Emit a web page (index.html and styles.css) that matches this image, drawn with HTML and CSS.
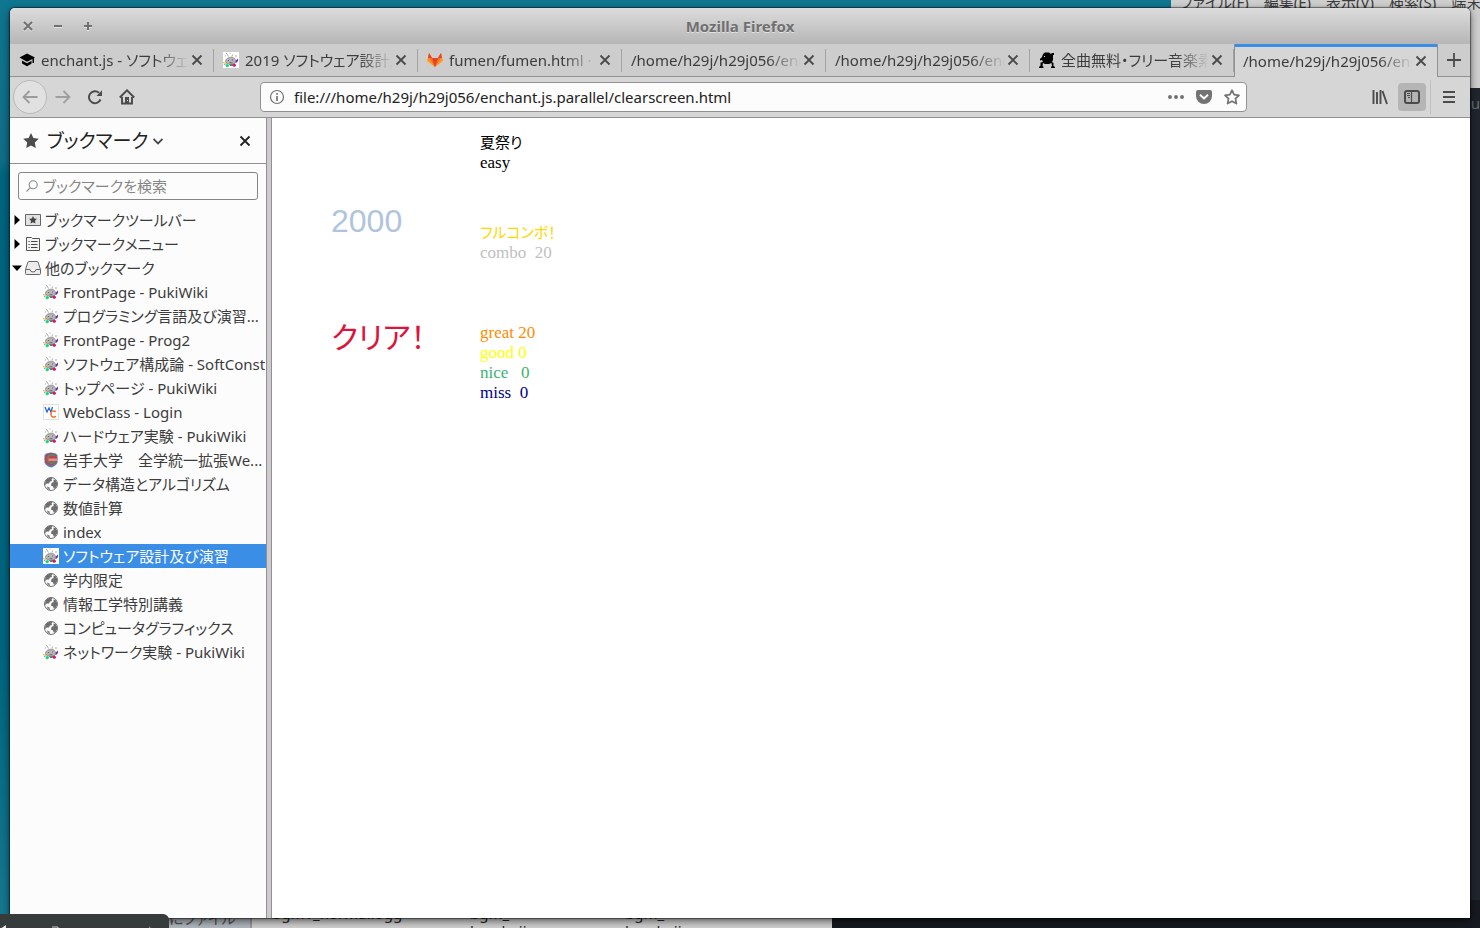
FILE: index.html
```html
<!DOCTYPE html>
<html lang="ja">
<head>
<meta charset="utf-8">
<title>Mozilla Firefox</title>
<link rel="stylesheet" href="styles.css">
</head>
<body>
<svg class="sprites" width="0" height="0" aria-hidden="true">
  <symbol id="close" viewBox="0 0 16 16"><path d="M3.500 3.500l9 9M12.500 3.500l-9 9" fill="none" stroke="currentColor" stroke-width="1.800"/></symbol>
  <symbol id="puki" viewBox="0 0 16 16">
    <path d="M4 2l1.500 2.500M3 1.500h1M9.500 2.500L9 4.500M12 4h2M6.500 1h1M2 4h1" stroke="#888" stroke-width="0.700" fill="none"/>
    <path d="M2.500 9.500c0-2 1.500-3.500 4-4 2-.8 5 0 5.500 2 1 .5 1.500 1.500 1 2.500-1 1.500-2.500 2-5 2-3 0-5.500-.5-5.500-2.500z" fill="#b4b4b4" stroke="#808080" stroke-width="0.700"/>
    <path d="M5 8h1v1H5zM9 7.500h1v1H9zM6.500 10h3v.8h-3z" fill="#666"/>
    <path d="M0 10l3 .8V12l-3-1z" fill="#dcc83c"/><path d="M.5 11.500L3 13H1z" fill="#c878b8"/>
    <path d="M12.500 9l2.500-2.500v2.500l-2 2z" fill="#6a1fc0"/><circle cx="4.200" cy="13.600" r="1.700" fill="#14d87c"/>
    <circle cx="11.300" cy="13.200" r="1.600" fill="#d01878"/><path d="M6 12h4v2H7z" fill="#777"/>
  </symbol>
  <symbol id="globe" viewBox="0 0 16 16">
    <circle cx="8" cy="8" r="6.500" fill="#fafafa" stroke="#6e6e6e"/>
    <path d="M2.500 4.500C4.500 2 7 1.300 9.500 2L8.500 3.500 9 5 7 5.500 6 7.500 4 7.500 2 9zM10.500 3.500l2 .5L14 6.500v3L12.500 12 11 13l-1-2.500L8 9.500 8.500 7l2-1z" fill="#6e6e6e"/>
    <path d="M4 10.500l2.500.8L7 14l-2.500-1z" fill="#858585"/>
  </symbol>
  <symbol id="star" viewBox="0 0 16 16"><path d="M8 0l2.400 5 5.400.7-4 3.800 1 5.500L8 12.400 3.200 15l1-5.500-4-3.800L5.600 5z"/></symbol>
</svg>

<div class="desktop">
  <div class="terminal" aria-hidden="true">
    <div class="terminal-menu"><span>ファイル(F)</span><span>編集(E)</span><span>表示(V)</span><span>検索(S)</span><span>端末(T)</span></div>
    <div class="terminal-screen">nu</div>
  </div>
  <div class="files" aria-hidden="true">
    <div class="files-side">にファイル</div>
    <div class="files-grid"><span>bgm1_normal.ogg</span><span>bgm_<br>kurakujj</span><span>bgm_<br>kurakujj</span></div>
  </div>
  <div class="night" aria-hidden="true"></div>

  <main class="window">
    <header class="titlebar">
      <div class="controls">
        <button aria-label="閉じる"><svg width="10" height="10" viewBox="0 0 10 10"><path d="M1 1l8 8M9 1L1 9" stroke="currentColor" stroke-width="2"/></svg></button>
        <button aria-label="最小化"><svg width="10" height="10" viewBox="0 0 10 10"><path d="M1 5h8" stroke="currentColor" stroke-width="2"/></svg></button>
        <button aria-label="最大化"><svg width="10" height="10" viewBox="0 0 10 10"><path d="M1 5h8M5 1v8" stroke="currentColor" stroke-width="2"/></svg></button>
      </div>
      <h1>Mozilla Firefox</h1>
    </header>

    <nav class="tabs">
      <div class="tab"><svg class="icon" viewBox="0 0 16 16"><path d="M8 1.500l8 4-1 .6v5h-1.500V7L8 9.800.5 5.500z"/><path d="M3 8.500l5 2.800 4.500-2.500v3L8 14.300l-5-2.800z"/></svg><button class="label">enchant.js - ソフトウェア設計</button><button class="x" aria-label="タブを閉じる"><svg><use href="#close"/></svg></button></div>
      <div class="tab"><svg class="icon white"><use href="#puki"/></svg><button class="label">2019 ソフトウェア設計及び演習</button><button class="x" aria-label="タブを閉じる"><svg><use href="#close"/></svg></button></div>
      <div class="tab"><svg class="icon" viewBox="0 0 16 16"><path d="M8 15L0 9l2-8 3 5h6l3-5 2 8z" fill="#fc9a26"/><path d="M8 15L2 6l0-5 3 5h6l3-5v5z" fill="#fc6d26"/><path d="M8 15L5 6h6zM2 1l3 5H1zM14 1l-3 5h4z" fill="#e24329"/></svg><button class="label">fumen/fumen.html · master</button><button class="x" aria-label="タブを閉じる"><svg><use href="#close"/></svg></button></div>
      <div class="tab"><button class="label">/home/h29j/h29j056/enchant.js</button><button class="x" aria-label="タブを閉じる"><svg><use href="#close"/></svg></button></div>
      <div class="tab"><button class="label">/home/h29j/h29j056/enchant.js</button><button class="x" aria-label="タブを閉じる"><svg><use href="#close"/></svg></button></div>
      <div class="tab"><svg class="icon" viewBox="0 0 16 16"><path d="M4 2l2-1.500h4L12 2l1-1h2v2h-1v5l-1 2 1.500 1v3l1.500 1v1h-4v-1l1-1-.5-3L10 12H6l-2-1-.5 3 1 1v1H0v-1l1.500-1.500v-3L4 10 3 8l-2 .5V7l2-2z"/><path d="M5 4h1v1H5z" fill="#ddd"/></svg><button class="label">全曲無料・フリー音楽素材</button><button class="x" aria-label="タブを閉じる"><svg><use href="#close"/></svg></button></div>
      <div class="tab active"><button class="label">/home/h29j/h29j056/enchant.js</button><button class="x" aria-label="タブを閉じる"><svg><use href="#close"/></svg></button></div>
      <button class="new-tab" aria-label="新しいタブ"><svg width="16" height="16" viewBox="0 0 16 16"><path d="M1 8h14M8 1v14" stroke="currentColor" stroke-width="1.800"/></svg></button>
    </nav>

    <div class="toolbar">
      <div class="nav-buttons">
        <button class="back" aria-label="戻る"><svg viewBox="0 0 16 16"><path d="M15.500 8H1.500M7.500 2L1.500 8l6 6"/></svg></button>
        <button class="forward" aria-label="進む"><svg viewBox="0 0 16 16"><path d="M.5 8h14M8.500 2l6 6-6 6"/></svg></button>
        <button aria-label="再読み込み"><svg viewBox="0 0 16 16"><path d="M13.500 10.500A6 6 0 1 1 12 3.800" stroke-width="2"/><path d="M9.500 7H15V1.300z" fill="currentColor" stroke="none"/></svg></button>
        <button aria-label="ホーム"><svg viewBox="0 0 16 16"><path d="M.8 8.500L8 1.300l7.200 7.200M3 8v6.500h10V8" stroke-width="1.900"/><path d="M6 8h4v6H6z" fill="currentColor" stroke="none"/><path d="M8.500 11v1" stroke="#ddd" stroke-width="1"/></svg></button>
      </div>
      <div class="urlbar">
        <svg viewBox="0 0 16 16"><circle cx="8" cy="8" r="6.500" stroke-width="1.200"/><path d="M8 7v5M8 4v1.700" stroke-width="1.700"/></svg>
        <input type="text" aria-label="アドレス" value="file:///home/h29j/h29j056/enchant.js.parallel/clearscreen.html">
        <button aria-label="ページ操作"><svg viewBox="0 0 16 16"><g fill="currentColor" stroke="none"><circle cx="2" cy="8" r="2"/><circle cx="8" cy="8" r="2"/><circle cx="14" cy="8" r="2"/></g></svg></button>
        <button aria-label="Pocket に保存"><svg viewBox="0 0 16 16"><path d="M2 1h12q2 0 2 2v4a8 8 0 0 1-16 0V3q0-2 2-2z" fill="currentColor" stroke="none"/><path d="M4 5.800l4 3.700 4-3.700" stroke="#fff" stroke-width="2"/></svg></button>
        <button aria-label="ブックマークに追加"><svg viewBox="0 0 16 16"><path d="M8 1.200l2.100 4.400 4.900.7-3.500 3.400.9 4.900L8 12.200l-4.400 2.400.9-4.900L1 6.300l4.900-.7z" stroke-width="1.700" stroke-linejoin="round"/></svg></button>
      </div>
      <div class="tools">
        <button aria-label="ライブラリー"><svg viewBox="0 0 16 16"><path d="M1.500 1v14M5 3v12M8.500 1v14M10.500 2L15 15" stroke-width="1.900"/></svg></button>
        <button class="pressed" aria-label="サイドバー"><svg viewBox="0 0 16 16"><rect x="1" y="2" width="14" height="12" rx="2" stroke-width="2"/><path d="M7.500 2v12" stroke-width="1.200"/><path d="M3 4.500h3M3 6.500h3M4 8.500h2" stroke-width="1"/></svg></button>
        <button class="menu" aria-label="メニュー"><svg viewBox="0 0 16 16"><path d="M2 3h12M2 8h12M2 13h12" stroke-width="1.800"/></svg></button>
      </div>
    </div>

    <div class="body">
      <aside class="sidebar">
        <div class="side-head">
          <svg class="icon"><use href="#star"/></svg>
          <button class="side-title">ブックマーク<svg width="10" height="10" viewBox="0 0 10 10"><path d="M.5 3L5 7.500 9.500 3" fill="none" stroke="#4a4a4a" stroke-width="1.800"/></svg></button>
          <button class="x" aria-label="サイドバーを閉じる"><svg><use href="#close"/></svg></button>
        </div>
        <label class="search">
          <svg width="12" height="12" viewBox="0 0 12 12" fill="none" stroke="#8a8a8a" stroke-width="1.100"><circle cx="7.200" cy="4.800" r="4"/><path d="M4.300 7.700L.5 11.500"/></svg>
          <input type="search" placeholder="ブックマークを検索" aria-label="ブックマークを検索">
        </label>
        <ul class="tree">
          <li><a class="folder" href="#"><svg class="arrow" viewBox="0 0 10 10"><path d="M2.500 0v10L8 5z"/></svg><svg class="icon" viewBox="0 0 16 16"><path d="M.5 2.500h15v11H.5z" fill="#e2e2e2" stroke="#666"/><path d="M8 4l1.200 2.500 2.800.3-2 1.900.5 2.800L8 10.200l-2.500 1.300.5-2.800-2-1.900 2.800-.3z" fill="#444"/></svg>ブックマークツールバー</a></li>
          <li><a class="folder" href="#"><svg class="arrow" viewBox="0 0 10 10"><path d="M2.500 0v10L8 5z"/></svg><svg class="icon" viewBox="0 0 16 16"><path d="M1.500 14.500v-13h5l1 1h7v12z" fill="#f3f3f3" stroke="#555"/><path d="M3.500 5.500h1.200M6 5.500h6.500M3.500 8.500h1.200M6 8.500h6.500M3.500 11.500h1.200M6 11.500h6.500" stroke="#444"/></svg>ブックマークメニュー</a></li>
          <li><a class="folder" href="#"><svg class="arrow" viewBox="0 0 10 10"><path d="M0 2.500h10L5 8z"/></svg><svg class="icon" viewBox="0 0 16 16"><path d="M.5 13.500V9.500L3 2q.3-.5 1-.5h8q.7 0 1 .5l2.500 7.500v4q0 1-1 1h-13q-1 0-1-1zM.5 9.500H5q.5 2.500 3 2.500t3-2.500h4.500" fill="#ececec" stroke="#666"/></svg>他のブックマーク</a></li>
          <li><a href="#"><svg class="icon"><use href="#puki"/></svg><span>FrontPage - PukiWiki</span></a></li>
          <li><a href="#"><svg class="icon"><use href="#puki"/></svg><span>プログラミング言語及び演習...</span></a></li>
          <li><a href="#"><svg class="icon"><use href="#puki"/></svg><span>FrontPage - Prog2</span></a></li>
          <li><a href="#"><svg class="icon"><use href="#puki"/></svg><span>ソフトウェア構成論 - SoftConst</span></a></li>
          <li><a href="#"><svg class="icon"><use href="#puki"/></svg><span>トップページ - PukiWiki</span></a></li>
          <li><a href="#"><svg class="icon" viewBox="0 0 16 16"><path d="M.5.5h15v15H.5z" fill="#fff" stroke="#e2e2e2"/><path d="M2 3l2 5 2-4 2 4 1.500-5" fill="none" stroke="#2468dc" stroke-width="1.300"/><path d="M13 7.500Q8 5.500 8 10t5 2.500" fill="none" stroke="#f07028" stroke-width="1.500"/></svg><span>WebClass - Login</span></a></li>
          <li><a href="#"><svg class="icon"><use href="#puki"/></svg><span>ハードウェア実験 - PukiWiki</span></a></li>
          <li><a href="#"><svg class="icon" viewBox="0 0 16 16"><path d="M1.500 3.500L3 1.500l5-1 5 1 1.500 2v7Q13 14 8 15.500 3 14 1.500 10.500z" fill="#4a80bc"/><circle cx="8" cy="7.200" r="6.200" fill="#d03c4c"/><path d="M12 4.500Q8 1 5 5q-1.500 5.500 3 6 3.500 0 4-2.500" fill="none" stroke="#3d9a68" stroke-width="1.600"/><path d="M5.500 6.500h8.500v2.500H5.500z" fill="#e88c88"/></svg><span>岩手大学　全学統一拡張We...</span></a></li>
          <li><a href="#"><svg class="icon"><use href="#globe"/></svg><span>データ構造とアルゴリズム</span></a></li>
          <li><a href="#"><svg class="icon"><use href="#globe"/></svg><span>数値計算</span></a></li>
          <li><a href="#"><svg class="icon"><use href="#globe"/></svg><span>index</span></a></li>
          <li><a class="selected" href="#"><svg class="icon white"><use href="#puki"/></svg><span>ソフトウェア設計及び演習</span></a></li>
          <li><a href="#"><svg class="icon"><use href="#globe"/></svg><span>学内限定</span></a></li>
          <li><a href="#"><svg class="icon"><use href="#globe"/></svg><span>情報工学特別講義</span></a></li>
          <li><a href="#"><svg class="icon"><use href="#globe"/></svg><span>コンピュータグラフィックス</span></a></li>
          <li><a href="#"><svg class="icon"><use href="#puki"/></svg><span>ネットワーク実験 - PukiWiki</span></a></li>
        </ul>
      </aside>
      <div class="splitter"></div>
      <section class="page">
        <div class="song"><p class="name">夏祭り</p><p>easy</p></div>
        <p class="score">2000</p>
        <div class="combo"><p class="full">フルコンボ！</p><p>combo&nbsp; 20</p></div>
        <p class="clear">クリア！</p>
        <div class="counts"><p class="great">great 20</p><p class="good">good 0</p><p class="nice">nice&nbsp;&nbsp; 0</p><p class="miss">miss&nbsp; 0</p></div>
      </section>
    </div>
  </main>
  <div class="dock" aria-hidden="true"><svg width="160" height="14" viewBox="0 0 160 14"><path d="M0 13l6-4v5H0z" fill="#e8e8e8"/><path d="M52 11h6v2h3" fill="none" stroke="#ccc"/><path d="M99 12h6v2h-6z" fill="#8fe36c"/><path d="M149 10l4 4h-4z" fill="#888"/></svg></div>
</div>
</body>
</html>
```
FILE: styles.css
```css
* { box-sizing: border-box; }
body {
  margin: 0;
  font-family: "Noto Sans", "Noto Sans CJK JP", sans-serif;
  font-size: 15px;
  line-height: 20px;
  color: #3c3c3c;
  font-feature-settings: "palt";
}
p, h1, ul { margin: 0; padding: 0; }
button, input {
  font: inherit;
  font-feature-settings: inherit;
  color: inherit;
  background: none;
  border: 0;
  padding: 0;
  margin: 0;
}
button { display: flex; align-items: center; justify-content: center; }
input { outline: 0; min-width: 0; }
.sprites { position: absolute; }
.icon { width: 16px; height: 16px; flex: none; }
.white { background: #fff; }

.desktop {
  position: relative;
  height: 100vh;
  padding: 8px 10px 10px;
  overflow: hidden;
  background: linear-gradient(#0f7690, #0f6f88 160px, #006580 176px, #00657f 70%, #157a90);
}

/* windows lying behind the browser */
.terminal { position: absolute; top: 0; right: 0; bottom: 0; left: 1171px; background: #cfcfcf; }
.terminal-menu { display: flex; gap: 15px; padding-left: 9px; height: 96px; margin-top: -8px; white-space: nowrap; overflow: hidden; }
.terminal-screen { height: 100%; background: #21262e; color: #667078; text-align: right; line-height: 30px; }
.files { position: absolute; left: 169px; top: 880px; bottom: 0; width: 663px; display: flex; background: #d2d2d2; color: #222; }
.files-side { width: 83px; padding-top: 28px; background: #b3b9c0; border-right: 2px solid #999; color: #555; overflow: hidden; white-space: nowrap; }
.files-grid { flex: 1; display: grid; grid-template-columns: 198px 155px 1fr; padding: 24px 20px 0; line-height: 18px; }
.night { position: absolute; left: 832px; right: 0; top: 900px; bottom: 0; background: #171a20; }
.dock { position: absolute; left: 0; bottom: 0; width: 169px; height: 14px; background: #363b3b; border-radius: 0 6px 0 0; overflow: hidden; }

.window {
  position: relative;
  height: 100%;
  display: flex;
  flex-direction: column;
  background: #fff;
  border-radius: 5px 5px 0 0;
  box-shadow: 0 0 1px 1px rgba(0, 0, 0, .45), 0 3px 9px rgba(0, 0, 0, .6);
}

.titlebar {
  display: grid;
  grid-template-columns: 1fr auto 1fr;
  align-items: center;
  height: 36px;
  border-radius: 5px 5px 0 0;
  background: linear-gradient(#dcdcdc, #b6b6b6);
  color: #707070;
}
.titlebar h1 { font-size: 15px; font-weight: 700; text-shadow: 0 1px #e2e2e2; }
.controls { display: flex; gap: 20px; padding-left: 13px; }
.controls svg { filter: drop-shadow(0 1px #e6e6e6); }

.tabs { display: flex; height: 33px; background: #cdcdcd; }
.tab {
  position: relative;
  flex: 1 1 0;
  min-width: 0;
  display: flex;
  align-items: center;
  gap: 6px;
  padding: 0 9px;
  border-bottom: 1px solid #919191;
}
.tab:not(.active)::after {
  content: "";
  position: absolute;
  right: 0;
  top: 5px;
  bottom: 4px;
  width: 1px;
  background: #a3a3a3;
}
.tab .label {
  flex: 1;
  min-width: 0;
  display: block;
  text-align: left;
  white-space: nowrap;
  overflow: hidden;
  mask-image: linear-gradient(90deg, #000 calc(100% - 34px), transparent);
}
.x, .x svg { width: 16px; height: 16px; }
.x { flex: none; color: #4a4a4a; }
.tab .x { margin-left: -6px; }
.tab.active { padding: 0 8px; background: #d6d6d6; border: 1px solid #919191; border-width: 0 1px; box-shadow: inset 0 3px #3a8ee6; }
.new-tab { width: 32px; border-bottom: 1px solid #919191; color: #4a4a4a; }

.toolbar {
  display: flex;
  align-items: center;
  height: 41px;
  padding: 0 3px 0 3px;
  background: #d6d6d6;
  border-bottom: 1px solid #919191;
  color: #4c4c4c;
}
.toolbar svg { width: 16px; height: 16px; fill: none; stroke: currentColor; stroke-width: 1.800; }
.nav-buttons { display: flex; align-items: center; flex: 0 0 247px; }
.nav-buttons button { width: 32px; height: 32px; }
.nav-buttons .back { width: 34px; height: 34px; border: 1px solid #b9b9b9; border-radius: 50%; background: #e1e1e1; color: #9b9b9b; }
.nav-buttons .forward { color: #9f9f9f; }
.urlbar {
  flex: 1;
  display: flex;
  align-items: center;
  gap: 12px;
  height: 30px;
  padding: 0 6px 0 8px;
  background: #fcfcfc;
  border: 1px solid #919191;
  border-radius: 4px;
  color: #737373;
}
.urlbar > svg { margin-right: -3px; }
.urlbar input { flex: 1; color: #222; }
.tools { flex: 0 0 220px; display: flex; align-items: center; justify-content: flex-end; gap: 4px; }
.tools button { width: 28px; height: 28px; border-radius: 4px; }
.tools .pressed { background: #b5b5b5; }
.tools .menu { height: 34px; width: 37px; border-left: 1px solid #c0c0c0; border-radius: 0; }

.body { flex: 1; min-height: 0; display: flex; }
.sidebar { width: 256px; display: flex; flex-direction: column; background: #fcfcfc; }
.splitter { width: 6px; background: #cdcbcd; border: 1px solid #919191; border-width: 0 1px; }
.side-head { display: flex; align-items: center; height: 46px; padding: 0 13px; border-bottom: 1px solid #919191; fill: #4c4c4c; }
.side-title { flex: 1; justify-content: flex-start; gap: 5px; padding-left: 8px; font-size: 19px; color: #222; }
.side-head .x { color: #222; }
.search {
  display: flex;
  align-items: center;
  gap: 5px;
  height: 28px;
  margin: 8px;
  padding: 0 7px;
  border: 1px solid #858585;
  border-radius: 3px;
}
.search input { flex: 1; }
.search input::placeholder { color: #858585; opacity: 1; }
.tree { list-style: none; }
.tree a {
  display: flex;
  align-items: center;
  gap: 4px;
  height: 24px;
  padding-left: 33px;
  color: inherit;
  text-decoration: none;
  white-space: nowrap;
}
.tree .folder { padding-left: 2px; }
.tree .arrow { width: 10px; height: 10px; margin-right: -1px; }
.tree .selected { background: #3a8ee6; color: #fff; }

.page {
  flex: 1;
  display: grid;
  grid-template-columns: 149px 1fr;
  grid-template-rows: 80px 120px auto;
  align-content: start;
  padding: 5px 0 0 59px;
  font-family: "Liberation Serif", "Noto Sans CJK JP", serif;
  font-size: 17px;
}
.song { grid-column: 2; padding-top: 10px; color: #000; }
.name, .full { font-size: 15px; }
.score { font-family: "Liberation Sans", sans-serif; font-size: 32px; line-height: 36px; color: #b0c4de; }
.combo { padding-top: 20px; color: #c0c0c0; }
.full { color: #ffd700; }
.clear { font-size: 30px; line-height: 30px; color: #dc143c; }
.great { color: #ff8c00; }
.good { color: #ff0; }
.nice { color: #3cb371; }
.miss { color: #00008b; }
```
